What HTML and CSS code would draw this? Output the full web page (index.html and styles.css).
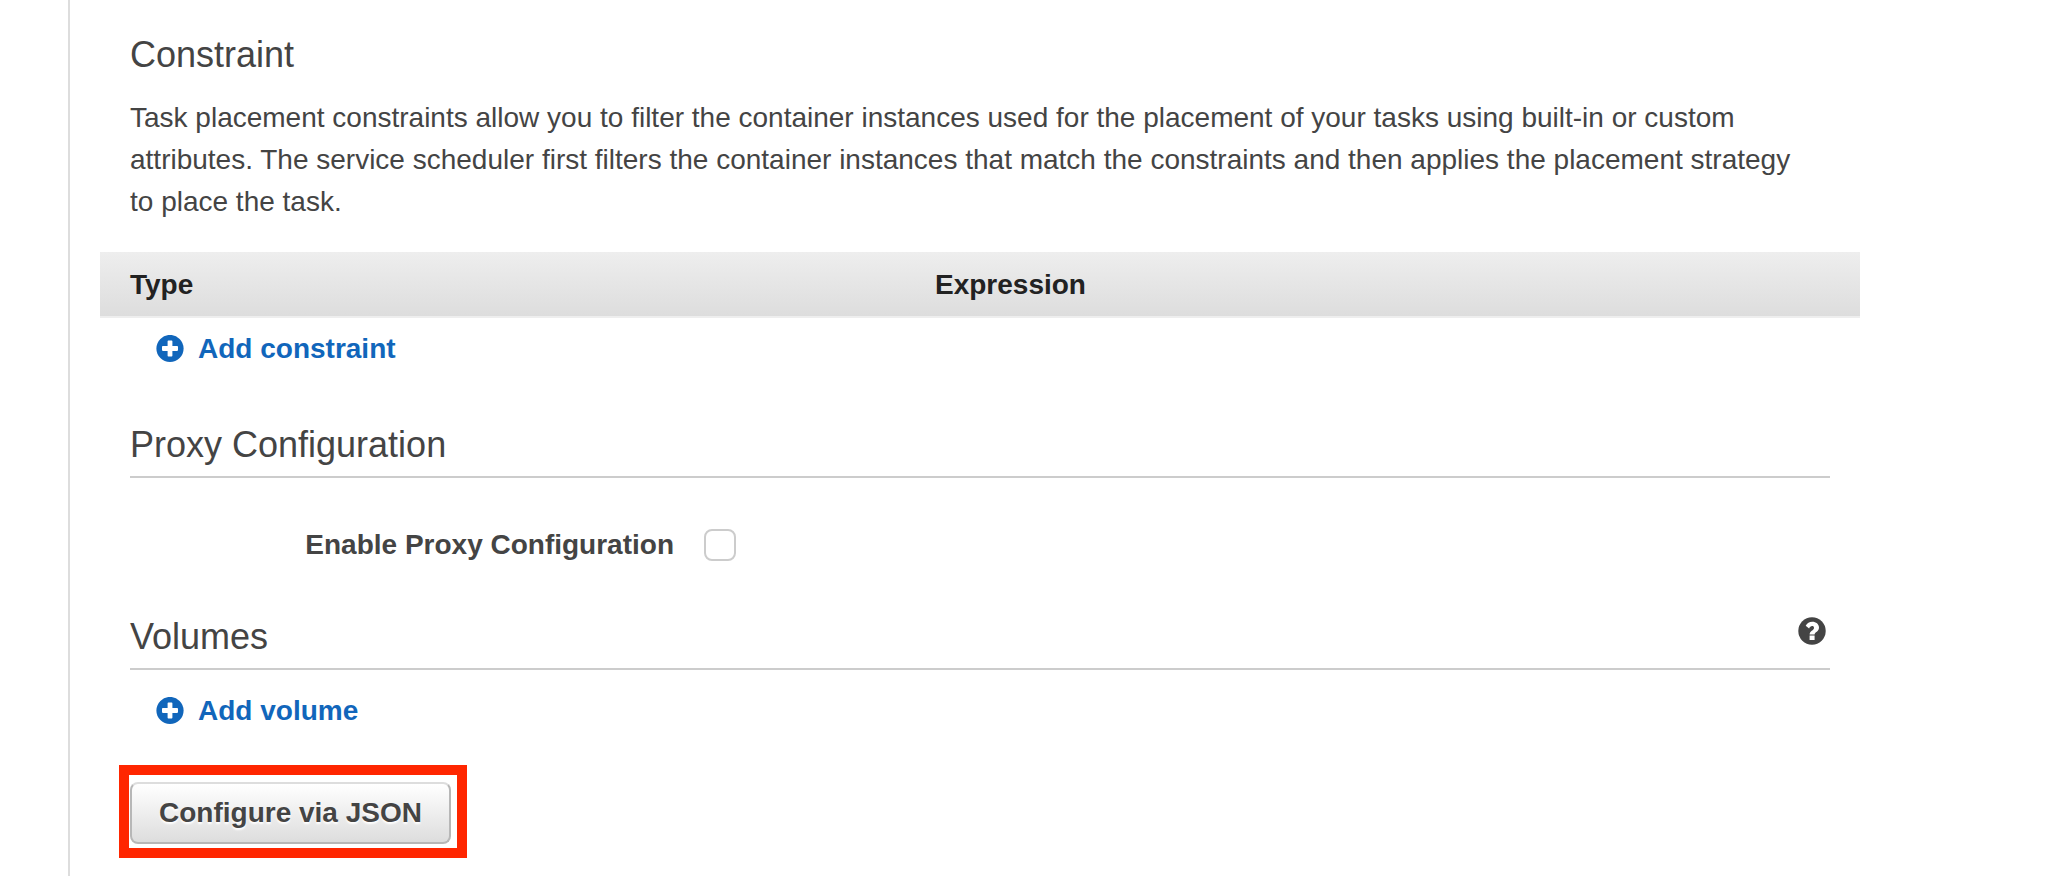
FILE: index.html
```html
<!DOCTYPE html>
<html lang="en">
<head>
<meta charset="utf-8">
<meta name="viewport" content="width=device-width, initial-scale=1">
<title>Task definition</title>
<link rel="stylesheet" href="styles.css">
</head>
<body>
<main class="panel">
  <section class="constraint">
    <h2 class="title">Constraint</h2>
    <p class="description">Task placement constraints allow you to filter the container instances used for the placement of your tasks using built-in or custom attributes. The service scheduler first filters the container instances that match the constraints and then applies the placement strategy to place the task.</p>
    <table class="grid">
      <colgroup><col><col><col class="grid-actions"></colgroup>
      <thead><tr><th scope="col">Type</th><th scope="col">Expression</th><td></td></tr></thead>
    </table>
    <a class="add" href="#">
      <svg class="icon" viewBox="0 0 28 28" aria-hidden="true"><circle cx="14" cy="13.500" r="13.600" fill="currentColor"/><path d="M12.400 5.500h3.200q.8 0 .8.800v4.800h4.800q.8 0 .8.800v3.200q0 .8-.8.800h-4.800v4.800q0 .8-.8.800h-3.200q-.8 0-.8-.8v-4.800H6.800q-.8 0-.8-.8v-3.200q0-.8.8-.8h4.800V6.300q0-.8.8-.8z" fill="#fff"/></svg>
      Add constraint
    </a>
  </section>

  <section class="proxy">
    <div class="heading"><h2 class="title">Proxy Configuration</h2></div>
    <div class="field">
      <label class="field-label" for="proxy">Enable Proxy Configuration</label>
      <input class="checkbox" type="checkbox" id="proxy">
    </div>
  </section>

  <section class="volumes">
    <div class="heading">
      <h2 class="title">Volumes</h2>
      <button class="help" type="button" aria-label="Help">
        <svg class="icon" viewBox="0 0 28 28" aria-hidden="true"><circle cx="14" cy="14" r="13.700" fill="currentColor"/><path d="M7.700 8.700C9.200 6 11.300 4.800 14.300 4.800C18 4.800 21 7.200 21 10.500C21 14.700 16.600 15 16.600 17.600H11.600C11.600 13.800 16 13.200 16 10.900C16 9.600 15.300 9.100 14.100 9.100C12.700 9.100 12 10 11.100 11.400zM11.600 18.500h5v4.500h-5z" fill="#fff"/></svg>
      </button>
    </div>
    <a class="add" href="#">
      <svg class="icon" viewBox="0 0 28 28" aria-hidden="true"><circle cx="14" cy="13.500" r="13.600" fill="currentColor"/><path d="M12.400 5.500h3.200q.8 0 .8.800v4.800h4.800q.8 0 .8.800v3.200q0 .8-.8.800h-4.800v4.800q0 .8-.8.800h-3.200q-.8 0-.8-.8v-4.800H6.800q-.8 0-.8-.8v-3.200q0-.8.8-.8h4.800V6.300q0-.8.8-.8z" fill="#fff"/></svg>
      Add volume
    </a>
  </section>

  <div class="highlight"><button class="json" type="button">Configure via JSON</button></div>
</main>
</body>
</html>
```

FILE: styles.css
```css
* {
  box-sizing: border-box;
}

body {
  margin: 0;
  background: #fff;
  color: #444;
  font: 28px/42px "Helvetica Neue", "Liberation Sans", Arial, sans-serif;
}

.panel {
  min-height: 100vh;
  margin-left: 68px;
  padding: 30px 234px 18px 60px;
  border-left: 2px solid #ddd;
}

.title {
  margin: 0;
  font-size: 36px;
  font-weight: 400;
  line-height: 50px;
}

.description {
  margin: 0;
  padding: 17px 20px 29px 0;
}

.grid {
  width: calc(100% + 60px);
  margin: 0 -30px 10px;
  table-layout: fixed;
  border-collapse: separate;
  border-spacing: 0;
  border-bottom: 2px solid #eee;
  background: linear-gradient(#eee, #ddd);
  color: #222;
}

.grid th {
  padding: 12px 30px 10px;
  text-align: left;
  font-weight: 700;
}

.grid-actions {
  width: 150px;
}

.add {
  display: flex;
  align-items: center;
  gap: 14px;
  width: fit-content;
  margin-left: 26px;
  color: #1166bb;
  font-weight: 700;
  text-decoration: none;
}

.icon {
  display: block;
  width: 28px;
  height: 28px;
}

.proxy {
  margin-top: 50px;
}

.heading {
  display: flex;
  justify-content: space-between;
  align-items: flex-start;
  padding-bottom: 6px;
  border-bottom: 2px solid #ccc;
}

.field {
  display: flex;
  align-items: center;
  gap: 30px;
  margin: 46px 0;
}

.field-label {
  width: 32%;
  text-align: right;
  font-weight: 700;
}

.checkbox {
  appearance: none;
  width: 32px;
  height: 32px;
  margin: 0;
  border: 2px solid #ccc;
  border-radius: 8px;
  background: #fff;
}

.help {
  padding: 5px 4px 0;
  border: 0;
  background: none;
  color: #444;
}

.volumes .add {
  margin-top: 20px;
}

.highlight {
  width: fit-content;
  margin: 33px 0 0 -11px;
  padding: 7px 6px 4px 1px;
  border: 10px solid #ff2600;
}

.json {
  display: block;
  padding: 8px 27px;
  border: 2px solid #b7b7b7;
  border-top-color: #ddd;
  border-radius: 8px;
  background: linear-gradient(#fff, #ddd);
  color: #444;
  font: inherit;
  font-weight: 700;
  text-shadow: 0 2px 2px #fff;
}
```
